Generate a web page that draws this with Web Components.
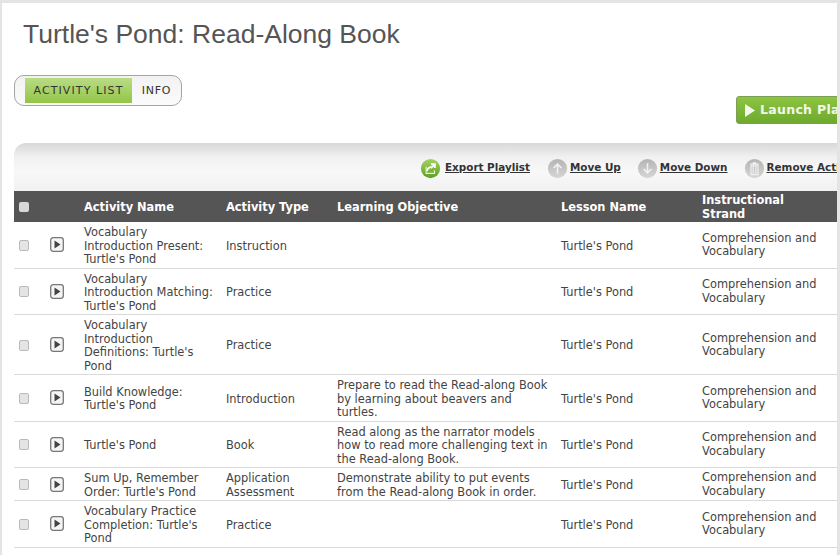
<!DOCTYPE html>
<html>
<head>
<meta charset="utf-8">
<style>
  html, body { margin: 0; height: 100%; overflow: hidden; background: #fff; }
  body { font-family: "DejaVu Sans", Verdana, sans-serif; }
</style>
</head>
<body>
<playlist-page heading="Turtle's Pond: Read-Along Book">
  <tab-switch slot="tabs"></tab-switch>
  <launch-button slot="launch"></launch-button>
  <playlist-toolbar slot="toolbar">
    <toolbar-action icon="export" label="Export Playlist"></toolbar-action>
    <toolbar-action icon="up" label="Move Up"></toolbar-action>
    <toolbar-action icon="down" label="Move Down"></toolbar-action>
    <toolbar-action icon="trash" label="Remove Activity"></toolbar-action>
  </playlist-toolbar>
  <playlist-head slot="table"></playlist-head>
  <playlist-row slot="table" name="Vocabulary Introduction Present: Turtle's Pond" type="Instruction"></playlist-row>
  <playlist-row slot="table" name="Vocabulary Introduction Matching: Turtle's Pond" type="Practice"></playlist-row>
  <playlist-row slot="table" name="Vocabulary Introduction Definitions: Turtle's Pond" type="Practice"></playlist-row>
  <playlist-row slot="table" name="Build Knowledge: Turtle's Pond" type="Introduction" objective="Prepare to read the Read-along Book by learning about beavers and turtles."></playlist-row>
  <playlist-row slot="table" name="Turtle's Pond" type="Book" objective="Read along as the narrator models how to read more challenging text in the Read-along Book."></playlist-row>
  <playlist-row slot="table" name="Sum Up, Remember Order: Turtle's Pond" type="Application Assessment" objective="Demonstrate ability to put events from the Read-along Book in order."></playlist-row>
  <playlist-row slot="table" name="Vocabulary Practice Completion: Turtle's Pond" type="Practice"></playlist-row>
</playlist-page>

<script>
const COLUMNS = '31px 33px 142px 111px 224px 141px 136px';

class PlaylistPage extends HTMLElement {
  constructor() {
    super();
    this.attachShadow({ mode: 'open' });
    this.shadowRoot.innerHTML = `
    <style>
      :host {
        display: block;
        height: 555px;
        box-sizing: border-box;
        overflow: hidden;
        background: #e4e4e4;
        padding: 3px 3px 0 2px;
      }
      .sheet { background: #fff; height: 100%; padding-left: 12px; overflow: hidden; }
      h1 {
        margin: 0;
        padding: 13px 0 0 9px;
        height: 60px;
        box-sizing: border-box;
        font: 400 26.5px/36px "Liberation Sans", Arial, sans-serif;
        color: #555;
      }
      .tabs { height: 33px; }
      .launch { display: flex; padding-left: 722px; height: 47px; white-space: nowrap; overflow: hidden; }
    </style>
    <div class="sheet">
      <h1></h1>
      <div class="tabs"><slot name="tabs"></slot></div>
      <div class="launch"><slot name="launch"></slot></div>
      <slot name="toolbar"></slot>
      <slot name="table"></slot>
    </div>`;
  }
  connectedCallback() {
    this.shadowRoot.querySelector('h1').textContent = this.getAttribute('heading');
  }
}

class TabSwitch extends HTMLElement {
  constructor() {
    super();
    this.attachShadow({ mode: 'open' });
    this.shadowRoot.innerHTML = `
    <style>
      :host {
        display: inline-flex;
        box-sizing: border-box;
        height: 31px;
        margin-top: 12px;
        padding: 2px 0 2px 10px;
        border: 1px solid #a4a4a4;
        border-radius: 10px;
        background: linear-gradient(#f2f2f2, #fbfbfb);
        font-size: 11px;
        letter-spacing: .8px;
        color: #333;
      }
      span { display: flex; align-items: center; }
      .on { width: 107px; justify-content: center; letter-spacing: 1.1px; background: linear-gradient(#b9dc84, #94c548); }
      .off { width: 49px; justify-content: center; }
    </style>
    <span class="on">ACTIVITY LIST</span><span class="off">INFO</span>`;
  }
}

class LaunchButton extends HTMLElement {
  constructor() {
    super();
    this.attachShadow({ mode: 'open' });
    this.shadowRoot.innerHTML = `
    <style>
      :host {
        display: inline-flex;
        flex: none;
        align-items: center;
        gap: 5px;
        box-sizing: border-box;
        height: 28px;
        padding: 0 12px 0 8px;
        border: 1px solid #7d9f55;
        border-radius: 3px;
        background: linear-gradient(#8cc540, #6ea92f);
        color: #f2f8e8;
        font-size: 12.5px;
        font-weight: 700;
        letter-spacing: .3px;
      }
      svg { display: block; }
      span { padding-bottom: 1px; }
    </style>
    <svg width="10" height="13" viewBox="0 0 10 13"><path d="M0 0L10 6.5L0 13z" fill="#f4f8ec"/></svg>
    <span>Launch Playlist</span>`;
  }
}

class PlaylistToolbar extends HTMLElement {
  constructor() {
    super();
    this.attachShadow({ mode: 'open' });
    this.shadowRoot.innerHTML = `
    <style>
      :host {
        display: flex;
        align-items: center;
        box-sizing: border-box;
        height: 48px;
        padding: 2px 0 0 406px;
        gap: 16px;
        overflow: hidden;
        white-space: nowrap;
        border-top-left-radius: 12px;
        background: linear-gradient(#d8d8d8, #f1f1f1 30%, #f8f8f8 60%, #f1f1f1);
      }
    </style>
    <slot></slot>`;
  }
}

const ICONS = {
  export: `<circle cx="12" cy="12" r="11" fill="url(#g)"/><path d="M8 15c.5-3 2.500-5 6-5M12.500 7H17v4.500M16.500 7.500l-4 4" fill="none" stroke="#fff" stroke-width="2"/><path d="M7 10v7.500h9.500V14" fill="none" stroke="#e6f3d4" stroke-width="1.300"/>`,
  up: `<circle cx="12" cy="12" r="11" fill="url(#g)"/><path d="M12 18V7M7.500 11.500L12 7l4.500 4.500" fill="none" stroke="#f2f2f2" stroke-width="1.800"/>`,
  down: `<circle cx="12" cy="12" r="11" fill="url(#g)"/><path d="M12 6v11M7.500 12.500L12 17l4.500-4.500" fill="none" stroke="#f2f2f2" stroke-width="1.800"/>`,
  trash: `<circle cx="12" cy="12" r="11" fill="url(#g)"/><path d="M7 7h10M10 5.500h4M8 9h8v10H8zM10.500 10v8M13.500 10v8" fill="none" stroke="#f2f2f2" stroke-width="1.300"/>`
};

class ToolbarAction extends HTMLElement {
  constructor() {
    super();
    this.attachShadow({ mode: 'open' });
    this.shadowRoot.innerHTML = `
    <style>
      :host {
        display: inline-flex;
        flex: none;
        align-items: center;
        gap: 2px;
        font-size: 10.4px;
        font-weight: 700;
        color: #333;
      }
      :host([icon="export"]) { gap: 4px; margin-right: 1px; }
      :host([icon="export"]) span { padding-top: 1px; }
      svg { display: block; flex: none; }
      span { text-decoration: underline; padding-bottom: 3px; }
    </style>
    <svg width="21" height="21" viewBox="0 0 24 24"></svg>
    <span></span>`;
  }
  connectedCallback() {
    const icon = this.getAttribute('icon');
    const stops = icon === 'export'
      ? '<stop offset="0" stop-color="#a5d35f"/><stop offset="1" stop-color="#5fa025"/>'
      : '<stop offset="0" stop-color="#b4b4b4"/><stop offset="1" stop-color="#d6d6d6"/>';
    this.shadowRoot.querySelector('svg').innerHTML =
      `<defs><linearGradient id="g" x1="0" y1="0" x2="0" y2="1">${stops}</linearGradient></defs>` + ICONS[icon];
    this.shadowRoot.querySelector('span').textContent = this.getAttribute('label');
  }
}

class PlaylistHead extends HTMLElement {
  constructor() {
    super();
    this.attachShadow({ mode: 'open' });
    this.shadowRoot.innerHTML = `
    <style>
      :host {
        display: grid;
        grid-template-columns: ${COLUMNS};
        align-items: center;
        box-sizing: border-box;
        height: 31px;
        padding-top: 2px;
        background: #555;
        color: #fff;
        font-size: 11.4px;
        font-weight: 700;
        line-height: 13.5px;
      }
      div { padding-left: 6px; padding-right: 4px; }
      .box {
        width: 10px;
        height: 10px;
        padding: 0;
        margin-left: 5px;
        margin-bottom: 2px;
        border-radius: 2px;
        background: #d8d8d8;
      }
      .strand { padding-right: 30px; }
    </style>
    <div class="box"></div><div></div>
    <div>Activity Name</div><div>Activity Type</div><div>Learning Objective</div><div>Lesson Name</div>
    <div class="strand">Instructional Strand</div>`;
  }
}

class PlaylistRow extends HTMLElement {
  constructor() {
    super();
    this.attachShadow({ mode: 'open' });
    this.shadowRoot.innerHTML = `
    <style>
      :host {
        display: grid;
        grid-template-columns: ${COLUMNS};
        align-items: center;
        padding: 4px 0 1px;
        border-bottom: 1px solid #d9d9d9;
        color: #444;
        font-size: 11.4px;
        line-height: 13.5px;
      }
      div { padding-left: 6px; padding-right: 4px; }
      .check { padding: 0 0 0 5px; margin-top: -2px; }
      .check i {
        display: block;
        box-sizing: border-box;
        width: 10px;
        height: 11px;
        border: 1px solid #b9b9b9;
        border-radius: 2px;
        background: #e4e4e4;
      }
      .play { padding: 0 0 0 5px; margin-top: -3px; }
      svg { display: block; }
      .strand { padding-right: 0; margin-top: -2px; }
    </style>
    <div class="check"><i></i></div>
    <div class="play">
      <svg width="14" height="15" viewBox="0 0 14 15">
        <rect x=".7" y=".7" width="12.600" height="13.600" rx="2.500" fill="#f5f5f5" stroke="#777" stroke-width="1.300"/>
        <path d="M4.500 3.500L10.500 7.500L4.500 11.500z" fill="#444"/>
      </svg>
    </div>
    <div class="name"></div><div class="type"></div><div class="objective"></div>
    <div>Turtle's Pond</div>
    <div class="strand">Comprehension and Vocabulary</div>`;
  }
  connectedCallback() {
    for (const key of ['name', 'type', 'objective']) {
      this.shadowRoot.querySelector('.' + key).textContent = this.getAttribute(key) || '';
    }
  }
}

customElements.define('playlist-page', PlaylistPage);
customElements.define('tab-switch', TabSwitch);
customElements.define('launch-button', LaunchButton);
customElements.define('playlist-toolbar', PlaylistToolbar);
customElements.define('toolbar-action', ToolbarAction);
customElements.define('playlist-head', PlaylistHead);
customElements.define('playlist-row', PlaylistRow);
</script>
</body>
</html>
